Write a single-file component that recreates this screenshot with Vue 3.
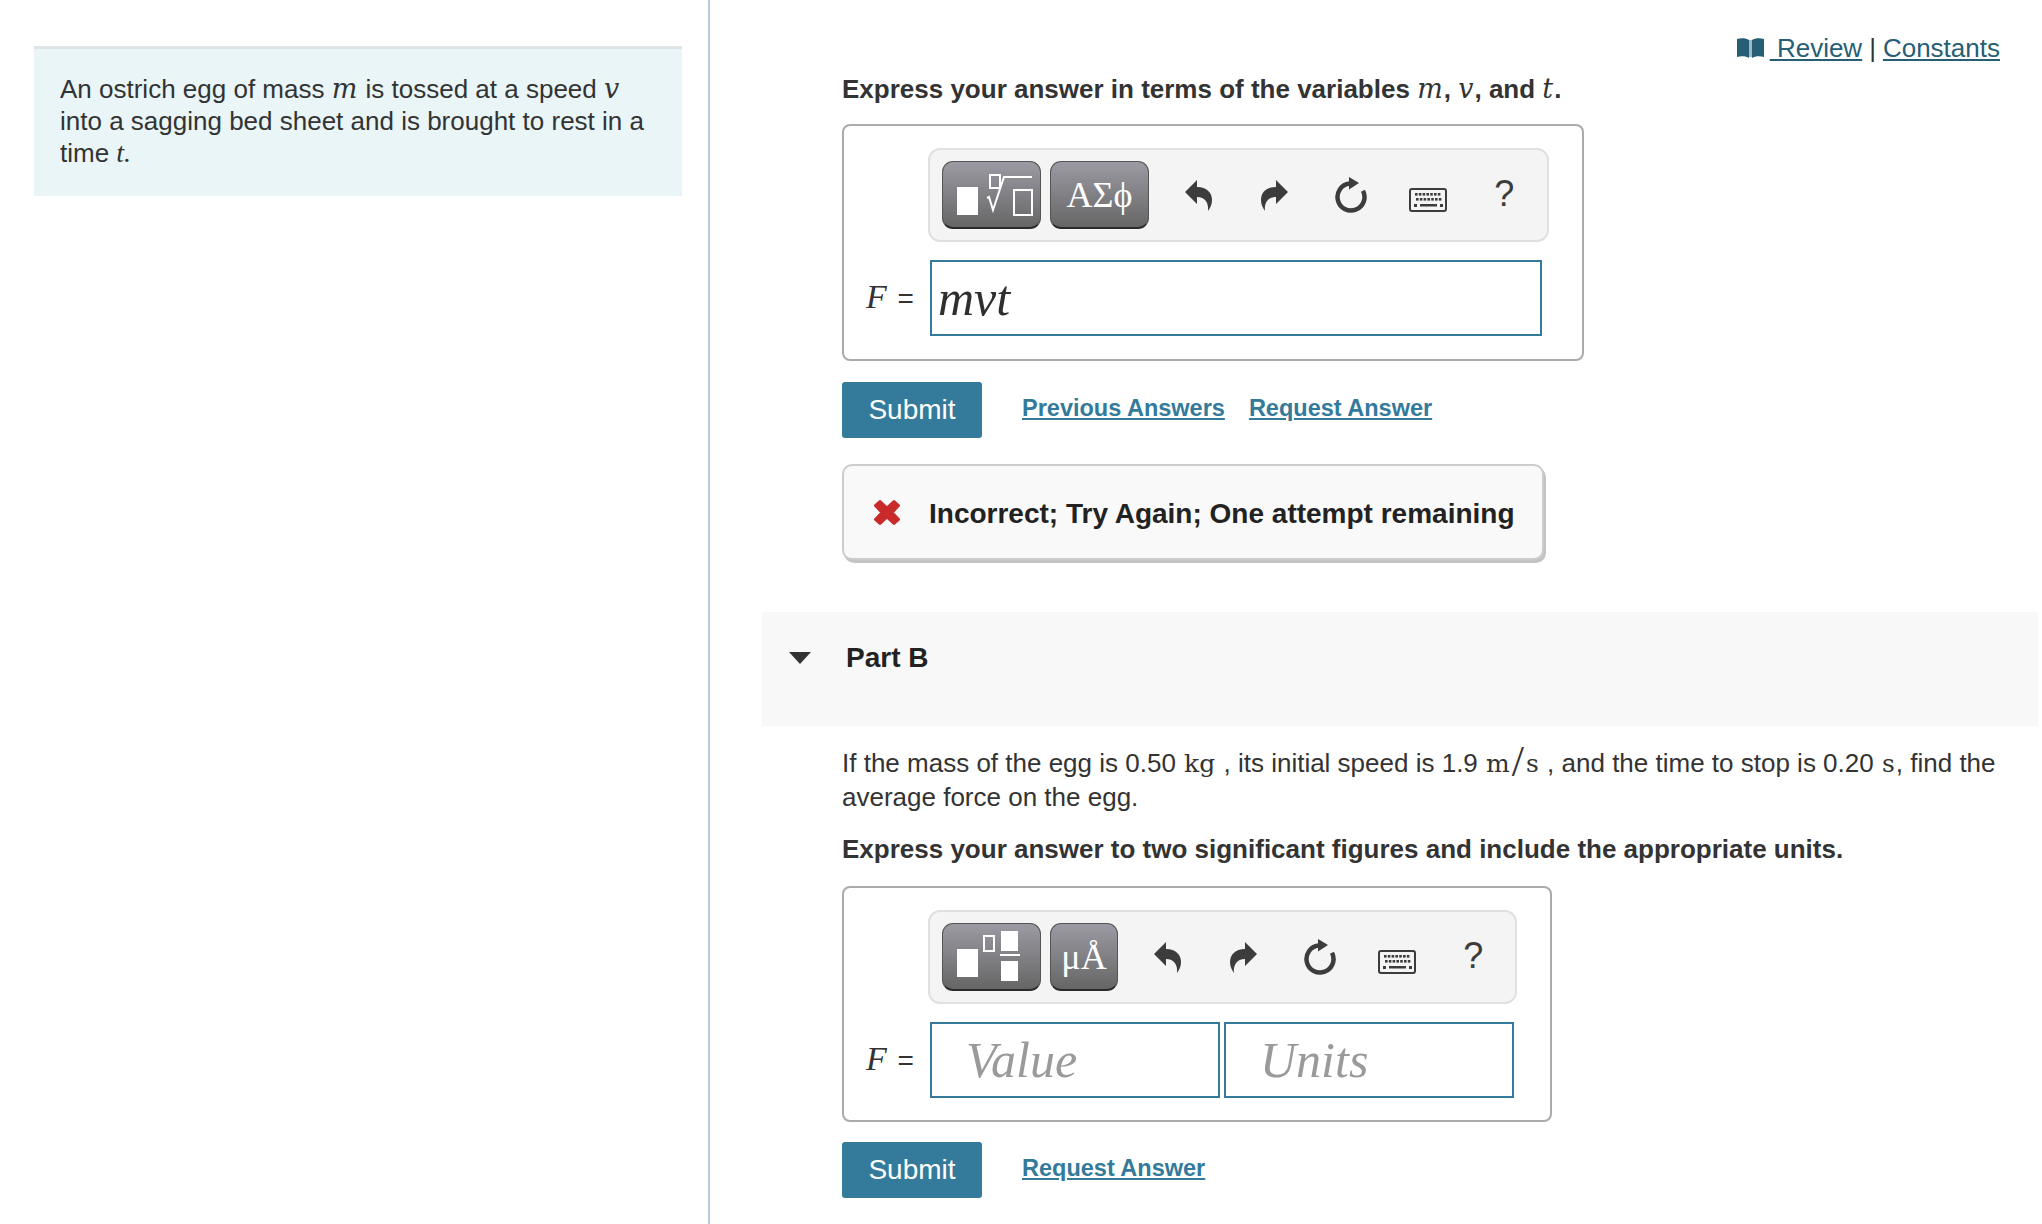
<script setup>
const undoPath = 'M0 12 L12 0 V7 C22 7 27 13 27 20 C27 25 25 28 23 31 C24 23 20 17 12 17 V24 Z'
const keyDots = [0, 1, 2, 3, 4, 5, 6]
</script>

<template>
  <div class="page">
    <aside class="side">
      <div class="intro">
        An ostrich egg of mass <i class="var">m</i> is tossed at a speed <i class="var">v</i>
        into a sagging bed sheet and is brought to rest in a time <i class="ser">t.</i>
      </div>
    </aside>

    <main class="main">
      <div class="toplinks">
        <svg class="book" width="27" height="20" viewBox="0 0 27 20">
          <rect x="11" y="2" width="5" height="17" fill="#9dbac7" />
          <path d="M0 1 C4 0 9 0 12 2 V20 C9 18 4 18 0 19 Z M15 2 C18 0 23 0 27 1 V19 C23 18 18 18 15 20 Z" fill="#265e76" />
        </svg>
        <a class="toplink">&nbsp;Review</a>
        <span class="sep">|</span>
        <a class="toplink">Constants</a>
      </div>

      <section class="part">
        <p class="instr first">Express your answer in terms of the variables <i class="var">m</i>, <i class="var">v</i>, and <i class="var">t</i>.</p>

        <div class="answer wide">
          <div class="toolbar">
            <button class="tbtn big">
              <svg width="99" height="66" viewBox="0 0 99 66">
                <rect x="15" y="26" width="21" height="28" fill="#fff" />
                <rect x="48" y="14" width="10" height="13" fill="none" stroke="#fff" stroke-width="2" />
                <path d="M45 37 L47 36 L51 49 L62 16 H90" fill="none" stroke="#fff" stroke-width="2" />
                <rect x="72" y="29" width="18" height="25" fill="none" stroke="#fff" stroke-width="2" />
              </svg>
            </button>
            <button class="tbtn big sym">ΑΣϕ</button>
            <div class="tools">
              <span class="tool">
                <svg width="27" height="31" viewBox="0 0 27 31"><path :d="undoPath" fill="#3c3c3c" /></svg>
              </span>
              <span class="tool">
                <svg width="27" height="31" viewBox="0 0 27 31"><path :d="undoPath" fill="#3c3c3c" transform="matrix(-1 0 0 1 27 0)" /></svg>
              </span>
              <span class="tool">
                <svg width="32" height="36" viewBox="0 0 32 36">
                  <path d="M14.5 6.6 A13.5 13.5 0 1 0 28 13.8" fill="none" stroke="#3c3c3c" stroke-width="4.5" />
                  <path d="M14 0 L24 6 L14 12.5 Z" fill="#3c3c3c" />
                </svg>
              </span>
              <span class="tool kb">
                <svg width="38" height="24" viewBox="0 0 38 24">
                  <rect x="1" y="1" width="36" height="22" rx="2" fill="#f4f4f4" stroke="#3c3c3c" stroke-width="2" />
                  <rect v-for="n in keyDots" :key="n" :x="6 + n * 3.8" y="5" width="2.6" height="2.6" fill="#3c3c3c" />
                  <rect v-for="n in keyDots" :key="'b' + n" :x="7 + n * 3.8" y="10" width="2.6" height="2.6" fill="#3c3c3c" />
                  <rect x="5" y="16" width="3" height="3" fill="#3c3c3c" />
                  <rect x="11" y="16" width="17" height="2.5" fill="#3c3c3c" />
                  <rect x="31" y="16" width="3" height="3" fill="#3c3c3c" />
                </svg>
              </span>
              <span class="tool help">?</span>
            </div>
          </div>
          <div class="eq">
            <span class="flabel"><i>F</i> <b>=</b></span>
            <div class="field expr">mvt</div>
          </div>
        </div>

        <div class="actions">
          <button class="submit">Submit</button>
          <a class="alink">Previous Answers</a>
          <a class="alink">Request Answer</a>
        </div>

        <div class="feedback">
          <svg width="28" height="27" viewBox="0 0 28 27">
            <path d="M7 2.5 L14 9 L21 2.5 L25.5 6.5 L19 13.5 L25.5 20.5 L21 24.5 L14 18 L7 24.5 L2.5 20.5 L9 13.5 L2.5 6.5 Z" fill="#c92a2a" stroke="#c92a2a" stroke-width="3" stroke-linejoin="round" />
          </svg>
          <span class="fbtext">Incorrect; Try Again; One attempt remaining</span>
        </div>
      </section>

      <div class="band">
        <span class="caret"></span>
        <span class="ptitle">Part B</span>
      </div>

      <section class="part">
        <p class="para">
          If the mass of the egg is 0.50 <span class="unit">kg</span> , its initial speed is 1.9 <span class="unit">m<span class="slash">/</span>s</span> , and the time to stop is 0.20 <span class="unit">s</span>, find the average force on the egg.
        </p>
        <p class="instr second">Express your answer to two significant figures and include the appropriate units.</p>

        <div class="answer narrow">
          <div class="toolbar">
            <button class="tbtn big">
              <svg width="99" height="66" viewBox="0 0 99 66">
                <rect x="15" y="26" width="21" height="28" fill="#fff" />
                <rect x="42" y="13" width="10" height="15" fill="none" stroke="#fff" stroke-width="2" />
                <rect x="59" y="8" width="17" height="20" fill="#fff" />
                <rect x="58" y="31" width="20" height="2" fill="#fff" />
                <rect x="59" y="38" width="17" height="20" fill="#fff" />
              </svg>
            </button>
            <button class="tbtn small sym">μÅ</button>
            <div class="tools">
              <span class="tool">
                <svg width="27" height="31" viewBox="0 0 27 31"><path :d="undoPath" fill="#3c3c3c" /></svg>
              </span>
              <span class="tool">
                <svg width="27" height="31" viewBox="0 0 27 31"><path :d="undoPath" fill="#3c3c3c" transform="matrix(-1 0 0 1 27 0)" /></svg>
              </span>
              <span class="tool">
                <svg width="32" height="36" viewBox="0 0 32 36">
                  <path d="M14.5 6.6 A13.5 13.5 0 1 0 28 13.8" fill="none" stroke="#3c3c3c" stroke-width="4.5" />
                  <path d="M14 0 L24 6 L14 12.5 Z" fill="#3c3c3c" />
                </svg>
              </span>
              <span class="tool kb">
                <svg width="38" height="24" viewBox="0 0 38 24">
                  <rect x="1" y="1" width="36" height="22" rx="2" fill="#f4f4f4" stroke="#3c3c3c" stroke-width="2" />
                  <rect v-for="n in keyDots" :key="n" :x="6 + n * 3.8" y="5" width="2.6" height="2.6" fill="#3c3c3c" />
                  <rect v-for="n in keyDots" :key="'b' + n" :x="7 + n * 3.8" y="10" width="2.6" height="2.6" fill="#3c3c3c" />
                  <rect x="5" y="16" width="3" height="3" fill="#3c3c3c" />
                  <rect x="11" y="16" width="17" height="2.5" fill="#3c3c3c" />
                  <rect x="31" y="16" width="3" height="3" fill="#3c3c3c" />
                </svg>
              </span>
              <span class="tool help">?</span>
            </div>
          </div>
          <div class="eq">
            <span class="flabel"><i>F</i> <b>=</b></span>
            <div class="field hint">Value</div>
            <div class="field hint">Units</div>
          </div>
        </div>

        <div class="actions last">
          <button class="submit">Submit</button>
          <a class="alink">Request Answer</a>
        </div>
      </section>
    </main>
  </div>
</template>

<style>
html, body {
  background: #fff;
}
</style>

<style scoped>
.page {
  display: flex;
  width: 2042px;
  height: 1224px;
  overflow: hidden;
  font-family: "Liberation Sans", Arial, sans-serif;
  color: #333;
}

.side {
  box-sizing: border-box;
  width: 710px;
  flex: none;
  padding: 46px 0 0 34px;
  border-right: 2px solid #bccbdc;
}

.intro {
  box-sizing: border-box;
  width: 648px;
  height: 150px;
  padding: 24px 26px 0;
  background: #e9f5f7;
  border-top: 3px solid #dfe4e6;
  font-size: 26px;
  line-height: 32px;
}

.var {
  font-family: "DejaVu Serif", serif;
  font-size: 27px;
  font-weight: 400;
  line-height: 1;
  letter-spacing: 1px;
}

.ser {
  font-family: "Liberation Serif", serif;
  font-size: 28px;
  line-height: 1;
}

.main {
  flex: 1;
  min-width: 0;
  padding-left: 52px;
}

.toplinks {
  display: flex;
  align-items: center;
  justify-content: flex-end;
  height: 34px;
  margin-top: 31px;
  padding-right: 42px;
  font-size: 26px;
}

.book {
  margin-right: 6px;
}

.toplink {
  color: #265e76;
  text-decoration: underline;
}

.sep {
  margin: 0 7px;
}

.part {
  padding-left: 80px;
}

.instr {
  margin: 0;
  height: 34px;
  font-size: 26px;
  line-height: 34px;
  font-weight: 700;
}

.instr.first {
  margin-top: 7px;
}

.instr.second {
  margin-top: 18px;
}

.answer {
  box-sizing: border-box;
  padding: 22px 0 0 84px;
  background: #fff;
  border: 2px solid #aaa;
  border-radius: 8px;
}

.wide {
  width: 742px;
  height: 237px;
  margin-top: 18px;
}

.narrow {
  width: 710px;
  height: 236px;
  margin-top: 20px;
}

.toolbar {
  box-sizing: border-box;
  display: flex;
  align-items: flex-start;
  gap: 9px;
  height: 94px;
  padding: 11px 0 0 12px;
  background: #f4f4f4;
  border: 2px solid #e0e0e0;
  border-radius: 12px;
}

.wide .toolbar {
  width: 621px;
}

.narrow .toolbar {
  width: 589px;
}

.tbtn {
  box-sizing: border-box;
  height: 68px;
  padding: 0;
  background: linear-gradient(#9c9aa3, #666);
  border: 1px solid #555;
  border-bottom: 2px solid #2a2a2a;
  border-radius: 11px;
  color: #fff;
}

.tbtn svg {
  display: block;
  margin: -1px 0 0 -1px;
}

.big {
  width: 99px;
}

.small {
  width: 68px;
}

.sym {
  font-family: "Liberation Serif", serif;
  font-size: 36px;
  line-height: 1;
}

.tools {
  display: flex;
  margin-left: 2px;
  height: 68px;
}

.tool {
  display: flex;
  align-items: center;
  justify-content: center;
  width: 76.5px;
}

.kb {
  padding-top: 9px;
}

.help {
  font-size: 36px;
  color: #3c3c3c;
  padding-bottom: 2px;
}

.eq {
  display: flex;
  align-items: center;
  gap: 4px;
  margin-top: 18px;
  padding-left: 2px;
}

.flabel {
  width: 0;
  flex: none;
  margin-left: -64px;
  margin-right: 60px;
  white-space: nowrap;
  font-size: 28px;
  padding-bottom: 2px;
}

.flabel i {
  margin-right: 3px;
  font-family: "Liberation Serif", serif;
  font-size: 34px;
}

.flabel b {
  font-weight: 400;
  font-size: 28px;
}

.field {
  box-sizing: border-box;
  height: 76px;
  border: 2px solid #347a9b;
  font-family: "Liberation Serif", serif;
  font-style: italic;
  font-size: 50px;
  line-height: 72px;
}

.expr {
  width: 612px;
  padding-left: 6px;
  color: #2f2f2f;
}

.hint {
  width: 290px;
  padding-left: 34px;
  color: #9a9a9a;
}

.actions {
  display: flex;
  align-items: center;
  margin-top: 21px;
  height: 56px;
}

.actions.last {
  margin-top: 20px;
}

.submit {
  box-sizing: border-box;
  width: 140px;
  height: 56px;
  margin-right: 40px;
  padding: 0;
  background: #347a9b;
  border: 0;
  border-radius: 3px;
  color: #fff;
  font-family: "Liberation Sans", Arial, sans-serif;
  font-size: 28px;
}

.alink {
  margin-right: 24px;
  padding-bottom: 4px;
  color: #347a9b;
  font-size: 23.5px;
  font-weight: 700;
  text-decoration: underline;
}

.feedback {
  box-sizing: border-box;
  display: flex;
  align-items: center;
  gap: 28px;
  width: 702px;
  height: 96px;
  margin-top: 26px;
  padding-left: 29px;
  background: #f9f9f9;
  border: 2px solid #ccc;
  border-radius: 10px;
  box-shadow: 2px 3px 0 #c4c4c4;
  color: #222;
  font-size: 28px;
  font-weight: 700;
}

.fbtext {
  padding-top: 3px;
}

.band {
  display: flex;
  align-items: flex-start;
  height: 114px;
  margin-top: 52px;
  margin-right: 4px;
  padding: 28px 0 0 27px;
  box-sizing: border-box;
  background: #f8f8f8;
}

.caret {
  width: 0;
  height: 0;
  margin-top: 12px;
  border-left: 11px solid transparent;
  border-right: 11px solid transparent;
  border-top: 12px solid #333;
}

.ptitle {
  margin-left: 35px;
  font-size: 28px;
  line-height: 36px;
  font-weight: 700;
  color: #222;
}

.para {
  margin: 20px 0 0;
  padding-right: 30px;
  font-size: 26px;
  line-height: 34px;
}

.unit {
  margin: 0 1px;
  font-family: "DejaVu Serif", serif;
  font-size: 25px;
  line-height: 1;
}

.slash {
  margin: 0 2px;
  font-family: "Liberation Serif", serif;
  font-size: 44px;
  line-height: 0;
  vertical-align: -4px;
}
</style>
